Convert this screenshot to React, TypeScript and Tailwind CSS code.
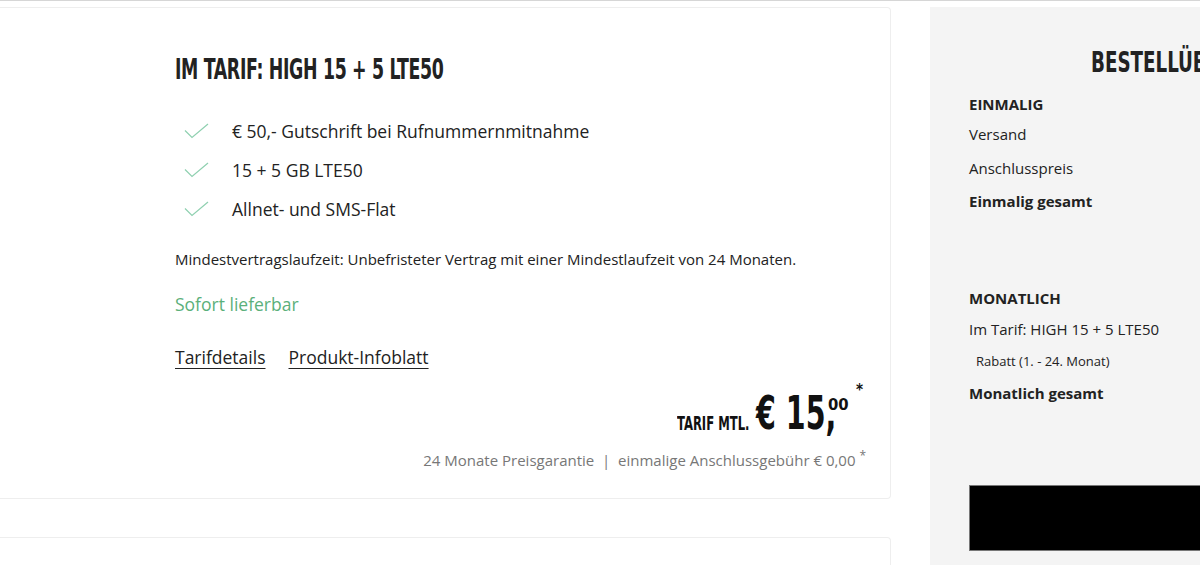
import React from "react";

const display = { fontFamily: "'Liberation Sans Narrow','DejaVu Sans Condensed','Liberation Sans',sans-serif" };
const body = { fontFamily: "'Open Sans','Noto Sans',sans-serif" };

function Check() {
  return (
    <svg width="26" height="16" viewBox="0 0 26 16" fill="none" className="shrink-0">
      <path d="M1 7.5 L8 14.5 L24 1" stroke="#8fd0b0" strokeWidth="1.2" />
    </svg>
  );
}

export default function App() {
  return (
    <div className="w-[1200px] h-[565px] overflow-hidden bg-white border-t border-[#d6d6d6]" style={body}>
      <div className="flex pt-[6px] gap-[39px]">
        <div className="w-[891px] shrink-0 flex flex-col gap-[38px]">
          <div className="h-[492px] border border-l-0 border-[#eeeeee] rounded-r-[4px] bg-white pl-[175px] pr-[27px] pt-[46px]">
            <h1 className="text-[29px] leading-[30px] font-bold text-[#222] tracking-[-0.5px] origin-left scale-x-[0.665] whitespace-nowrap" style={display}>
              IM TARIF: HIGH 15 + 5 LTE50
            </h1>
            <ul className="mt-[35px] flex flex-col gap-[15px] pl-[9px]">
              {["€ 50,- Gutschrift bei Rufnummernmitnahme", "15 + 5 GB LTE50", "Allnet- und SMS-Flat"].map((t) => (
                <li key={t} className="flex items-center gap-[22px] text-[17.5px] leading-[24px] text-[#222]">
                  <Check />
                  <span>{t}</span>
                </li>
              ))}
            </ul>
            <p className="mt-[28px] text-[15px] leading-[20px] text-[#222] whitespace-nowrap">
              Mindestvertragslaufzeit: Unbefristeter Vertrag mit einer Mindestlaufzeit von 24 Monaten.
            </p>
            <p className="mt-[23px] text-[17.5px] leading-[24px] text-[#5bb07a]">Sofort lieferbar</p>
            <div className="mt-[29px] flex gap-[23px] text-[17.5px] leading-[24px] text-[#222]">
              <span className="underline underline-offset-[4px] decoration-[1px]">Tarifdetails</span>
              <span className="underline underline-offset-[4px] decoration-[1px]">Produkt-Infoblatt</span>
            </div>
            <div className="mt-[20px] flex justify-end items-start text-[#111]">
              <span className="mt-[23px] inline-block w-[71px] overflow-visible">
                <span className="inline-block text-[19px] leading-[19px] font-bold origin-left scale-x-[0.68] whitespace-nowrap" style={display}>TARIF MTL.</span>
              </span>
              <span className="ml-[8px] inline-block w-[72px] overflow-visible">
                <span className="inline-block text-[47px] leading-[47px] font-bold origin-left scale-x-[0.675] whitespace-nowrap" style={display}>€ 15,</span>
              </span>
              <span className="mt-[3px] inline-block w-[21px]">
                <span className="inline-block text-[16.5px] leading-[16.5px] font-bold whitespace-nowrap" style={display}>00</span>
              </span>
              <span className="ml-[7px] -mt-[6px] inline-block text-[15px] leading-[15px] font-bold" style={display}>*</span>
            </div>
            <p className="mt-[14px] -mr-[3px] text-right text-[15px] leading-[20px] text-[#777] whitespace-nowrap">
              24 Monate Preisgarantie&nbsp; | &nbsp;einmalige Anschlussgebühr € 0,00 <sup className="text-[12px]">*</sup>
            </p>
          </div>
          <div className="h-[60px] border border-l-0 border-[#eeeeee] rounded-tr-[4px] bg-white" />
        </div>
        <div className="flex-1 h-[560px] bg-[#f4f4f4] pl-[39px] pt-[41px] overflow-hidden">
          <h2 className="ml-[122px] text-[29px] leading-[28px] font-bold text-[#222] whitespace-nowrap origin-left scale-x-[0.7]" style={display}>
            BESTELLÜBERSICHT
          </h2>
          <div className="mt-[18px] text-[15px] leading-[20px] font-bold text-[#222]">EINMALIG</div>
          <div className="mt-[10px] text-[15px] leading-[20px] text-[#222]">Versand</div>
          <div className="mt-[14px] text-[15px] leading-[20px] text-[#222]">Anschlusspreis</div>
          <div className="mt-[13px] text-[15px] leading-[20px] font-bold text-[#222]">Einmalig gesamt</div>
          <div className="mt-[77px] text-[15px] leading-[20px] font-bold text-[#222]">MONATLICH</div>
          <div className="mt-[11px] text-[15px] leading-[20px] text-[#222] whitespace-nowrap">Im Tarif: HIGH 15 + 5 LTE50</div>
          <div className="mt-[12px] pl-[7px] text-[13px] leading-[20px] text-[#222] whitespace-nowrap">Rabatt (1. - 24. Monat)</div>
          <div className="mt-[12px] text-[15px] leading-[20px] font-bold text-[#222] whitespace-nowrap">Monatlich gesamt</div>
          <div className="mt-[82px] h-[66px] bg-black border border-[#777] w-[400px]" />
        </div>
      </div>
    </div>
  );
}
